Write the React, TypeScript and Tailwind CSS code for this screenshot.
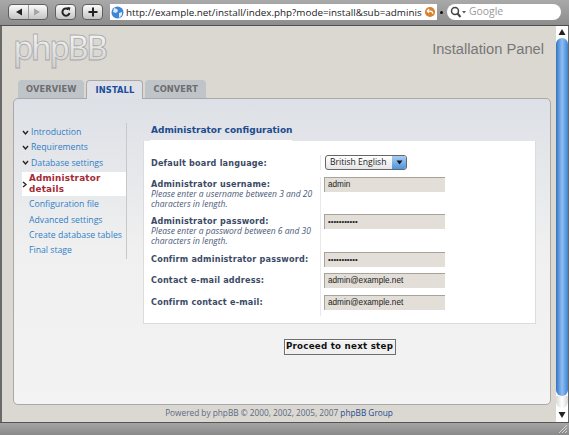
import React from 'react';

const sans = "font-['DejaVu_Sans',sans-serif]";
const lucida = "font-['Open_Sans',sans-serif]";
const helvetica = "font-['Liberation_Sans',sans-serif]";

const doneSteps = ['Introduction', 'Requirements', 'Database settings'];
const nextSteps = ['Configuration file', 'Advanced settings', 'Create database tables', 'Final stage'];

function ToolButton({ children, className }: { children: React.ReactNode; className?: string }) {
  return (
    <div className={`flex h-[16px] items-center justify-center rounded-[4px] border border-[#5f5f5f] bg-gradient-to-b from-[#fbfbfb] to-[#c4c4c4] ${className ?? ''}`}>
      {children}
    </div>
  );
}

function Toolbar() {
  return (
    <div className="flex h-[26px] shrink-0 items-center border-b border-[#4f4f4f] bg-gradient-to-b from-[#a9a9a9] to-[#8d8d8d] pb-[1px] pl-[8px]">
      <ToolButton className="w-[40px]">
        <svg width="38" height="14" viewBox="0 0 38 14">
          <path d="M7 7l6-3.500v7z" fill="#222" />
          <path d="M19.500 0v14" stroke="#9a9a9a" />
          <path d="M31 7l-6-3.500v7z" fill="#a5a5a5" />
        </svg>
      </ToolButton>
      <ToolButton className="ml-[7px] w-[21px]">
        <svg width="12" height="12" viewBox="0 0 12 12" fill="none">
          <path d="M9.500 7a3.600 3.600 0 1 1-1-3.600" stroke="#222" strokeWidth="2" />
          <path d="M7 1l3.500 0.500L9.500 5z" fill="#222" />
        </svg>
      </ToolButton>
      <ToolButton className="ml-[6px] w-[21px]">
        <svg width="10" height="10" viewBox="0 0 10 10">
          <path d="M5 0.500v9M0.500 5h9" stroke="#222" strokeWidth="2" />
        </svg>
      </ToolButton>
      <div className="ml-[7px] flex h-[16px] w-[327px] items-center bg-white pl-[1px]">
        <svg width="13" height="13" viewBox="0 0 13 13" className="shrink-0">
          <circle cx="6.500" cy="6.500" r="6" fill="#3f87d6" />
          <path d="M3 2l3 1 1 2-2 2-3-1zM8 7l3-1 0 3-3 3z" fill="#dfeaf6" />
        </svg>
        <span className={`ml-[2px] min-w-0 flex-1 whitespace-nowrap text-[9.850px] text-[#1a1a1a] ${lucida}`}>
          http://example.net/install/index.php?mode=install&amp;sub=adminis
        </span>
        <svg width="12" height="12" viewBox="0 0 13 13" className="mr-[1px] shrink-0">
          <circle cx="6.500" cy="6.500" r="5.500" fill="#d9822f" />
          <path d="M9.500 8.500a3 3 0 0 0-3-3H4M5.500 3.500l-2 2 2 2" fill="none" stroke="#fff" strokeWidth="1.300" />
        </svg>
      </div>
      <span className="ml-[3px] h-[3px] w-[3px] rounded-full bg-[#111]" />
      <div className="ml-[4px] flex h-[16px] w-[114px] items-center rounded-full bg-white pl-[3px]">
        <svg width="16" height="12" viewBox="0 0 16 12" fill="none" className="shrink-0">
          <circle cx="5" cy="5" r="3.500" stroke="#444" strokeWidth="1.500" />
          <path d="M7.500 7.500l3 3.500" stroke="#444" strokeWidth="2" />
          <path d="M12 5h4l-2 2.500z" fill="#555" />
        </svg>
        <span className={`ml-[3px] text-[10.400px] text-[#9b9b9b] ${lucida}`}>Google</span>
      </div>
    </div>
  );
}

function Scrollbar() {
  return (
    <div className="flex w-[12px] shrink-0 flex-col items-center bg-white">
      <svg width="8" height="10" viewBox="0 0 8 10" className="mt-[1px] shrink-0">
        <path d="M4 2l3.500 6h-7z" fill="#222" />
      </svg>
      <div className="mt-[1px] h-[358px] shrink-0 self-stretch rounded-full bg-gradient-to-r from-[#2f74c4] via-[#8fbdf0] to-[#3d86d8]" />
      <div className="h-[12px] shrink-0 self-stretch rounded-b-full bg-gradient-to-r from-[#d8d8d8] via-white to-[#d8d8d8]" />
      <div className="flex-1" />
      <svg width="8" height="10" viewBox="0 0 8 10" className="mb-[2px] shrink-0">
        <path d="M4 8L0.500 2h7z" fill="#222" />
      </svg>
    </div>
  );
}

function Tab({ label, active }: { label: string; active?: boolean }) {
  if (active) {
    return (
      <div className="relative z-10 -mb-[1px] flex h-[19px] w-[57px] items-center justify-center rounded-t-[4px] border border-b-0 border-[#a9a9a9] bg-[#dfe1e6] text-[8.300px] font-bold tracking-[0.100px] text-[#1a4f9c]">
        {label}
      </div>
    );
  }
  return (
    <div className="flex h-[18px] items-center justify-center rounded-t-[4px] bg-[#bfc4c9] px-[8px] text-[8.300px] font-bold tracking-[0.100px] text-[#6d6d6d]">
      {label}
    </div>
  );
}

function Sidebar() {
  return (
    <div className={`ml-[8px] mt-[24px] w-[105px] shrink-0 self-start border-r border-[#c6c8cc] pt-[2px] text-[8.700px] leading-[15.400px] text-[#2f7fc7] ${lucida}`}>
      {doneSteps.map((step) => (
        <div key={step} className="flex h-[15.400px] items-center">
          <svg width="9" height="6" viewBox="0 0 9 6" className="shrink-0">
            <path d="M1 1l2.500 3L6 1" fill="none" stroke="#222" strokeWidth="1.400" />
          </svg>
          {step}
        </div>
      ))}
      <div className="my-[1px] flex h-[24px] items-center bg-white">
        <svg width="7" height="7" viewBox="0 0 7 7" className="shrink-0">
          <path d="M1 1l3 2.500L1 6" fill="none" stroke="#222" strokeWidth="1.300" />
        </svg>
        <span className={`text-[8.800px] font-bold leading-[11.500px] tracking-[0.200px] text-[#a52a35] ${sans}`}>
          Administrator
          <br />
          details
        </span>
      </div>
      {nextSteps.map((step) => (
        <div key={step} className="h-[15.400px] whitespace-nowrap pl-[7px]">
          {step}
        </div>
      ))}
    </div>
  );
}

function Field({ label, hint, value, password, rowClass }: { label: string; hint?: string; value: string; password?: boolean; rowClass: string }) {
  return (
    <div className={`flex ${rowClass}`}>
      <div className="w-[176px] shrink-0 pl-[7px] pt-[2px]">
        <div className="whitespace-nowrap text-[8.100px] font-bold leading-[10px] tracking-[0.200px] text-[#3b4a66]">{label}</div>
        {hint && <div className={`w-[168px] text-[8.500px] italic leading-[9.500px] text-[#4a5a78] ${lucida}`}>{hint}</div>}
      </div>
      <div className="border-l border-[#e9e9e9] pl-[3px]">
        <div className={`flex h-[15px] w-[121px] items-center border-t border-l border-[#a5a39c] bg-[#e3dfd8] pl-[3px] text-[#222] ${helvetica} ${password ? 'text-[7.700px]' : 'text-[8.200px]'}`}>
          {value}
        </div>
      </div>
    </div>
  );
}

function FormCard() {
  return (
    <div className="flex-1 pr-[14px] pl-[16px]">
      <div className="flex h-[42px] items-end">
        <div className="ml-[7px] w-[142px] whitespace-nowrap border-b border-white pb-[4px] pl-[1px] text-[9px] font-bold leading-[11px] text-[#1d4b8f]">
          Administrator configuration
        </div>
      </div>
      <div className="h-[183px] border border-t-0 border-[#dcdcdc] bg-white pt-[14px]">
        <div className="flex h-[22px]">
          <div className="w-[176px] shrink-0 pl-[7px] pt-[3px] text-[8.100px] font-bold leading-[10px] tracking-[0.200px] text-[#3b4a66]">
            Default board language:
          </div>
          <div className="h-[15px] border-l border-[#e9e9e9] pl-[4px]">
            <div className={`flex h-[15px] w-[82px] items-center overflow-hidden rounded-[3px] border border-[#666] bg-gradient-to-b from-white to-[#e6e6e6] pl-[4px] text-[8.600px] text-[#222] ${lucida}`}>
              <span className="flex-1 whitespace-nowrap">British English</span>
              <span className="flex h-full w-[14px] items-center justify-center bg-gradient-to-b from-[#a8ccf2] to-[#4f94de]">
                <svg width="7" height="5" viewBox="0 0 7 5">
                  <path d="M0.500 0.500h6L3.500 4.500z" fill="#1a1a1a" />
                </svg>
              </span>
            </div>
          </div>
        </div>
        <Field rowClass="h-[37px]" label="Administrator username:" hint="Please enter a username between 3 and 20 characters in length." value="admin" />
        <Field rowClass="h-[38px]" label="Administrator password:" hint="Please enter a password between 6 and 30 characters in length." value="•••••••••••" password />
        <Field rowClass="h-[21px]" label="Confirm administrator password:" value="•••••••••••" password />
        <Field rowClass="h-[22px]" label="Contact e-mail address:" value="admin@example.net" />
        <Field rowClass="h-[21px]" label="Confirm contact e-mail:" value="admin@example.net" />
      </div>
      <div className="mt-[15px] flex justify-center">
        <div className="flex h-[16px] w-[112px] items-center justify-center whitespace-nowrap border border-[#6e6e6e] bg-[#f0f0f0] text-[8.700px] font-bold tracking-[0.250px] text-[#111] shadow-[inset_1px_1px_0_#fff]">
          Proceed to next step
        </div>
      </div>
    </div>
  );
}

export default function App() {
  return (
    <div className={`flex h-[435px] w-[569px] flex-col overflow-hidden bg-[#8f8f8f] ${sans}`}>
      <Toolbar />
      <div className="flex min-h-0 flex-1">
        <div className="w-[2px] shrink-0 bg-[#6a6a6a]" />
        <div className="flex min-w-0 flex-1 flex-col bg-[#dbd8d1] pl-[11px] pr-[5px]">
          <div className="flex h-[54px] shrink-0 items-start justify-between">
            <span className="-mt-[2px] bg-gradient-to-b from-[#ffffff] to-[#cdcdcd] bg-clip-text text-[33.500px] font-semibold leading-[46px] tracking-[-3px] text-transparent [-webkit-text-stroke:0.8px_#a8a8a8] font-['Open_Sans',sans-serif]">
              phpBB
            </span>
            <span className={`mr-[7px] mt-[13px] text-[14.700px] leading-[20px] text-[#777] ${helvetica}`}>
              Installation Panel
            </span>
          </div>
          <div className="flex h-[18px] shrink-0 items-end gap-[2px] pl-[5px]">
            <Tab label="OVERVIEW" />
            <Tab label="INSTALL" active />
            <Tab label="CONVERT" />
          </div>
          <div className="flex h-[307px] shrink-0 rounded-[5px] border border-[#a9a9a9] bg-gradient-to-b from-[#dde0e6] via-[#f0f0f0] to-[#f3f3f3]">
            <Sidebar />
            <FormCard />
          </div>
          <div className={`flex-1 pr-[6px] pt-[2px] text-center text-[8.270px] leading-[12px] text-[#5a6a85] ${lucida}`}>
            Powered by phpBB © 2000, 2002, 2005, 2007 <span className="text-[#1d4b8f]">phpBB Group</span>
          </div>
        </div>
        <Scrollbar />
        <div className="w-[1px] shrink-0 bg-[#6a6a6a]" />
      </div>
      <div className="relative h-[13px] shrink-0 border-t border-[#555] bg-gradient-to-b from-[#a5a5a5] to-[#8a8a8a]">
        <svg width="10" height="10" viewBox="0 0 10 10" className="absolute bottom-[1px] right-[1px]">
          <path d="M9 1L1 9M9 4L4 9M9 7L7 9" stroke="#e5e5e5" strokeWidth="0.800" />
        </svg>
      </div>
    </div>
  );
}
